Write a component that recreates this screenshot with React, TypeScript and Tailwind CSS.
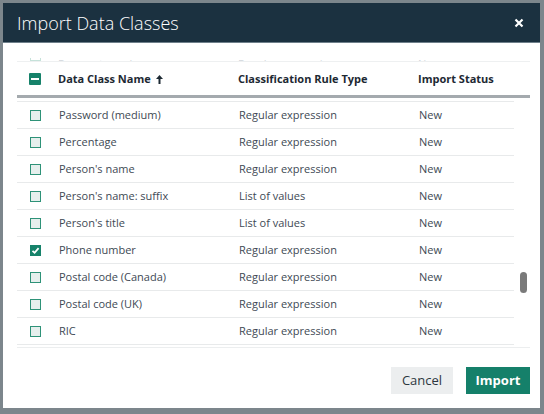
import React from "react";

const rows: { name: string; rule: string; checked?: boolean }[] = [
  { name: "Password (medium)", rule: "Regular expression" },
  { name: "Percentage", rule: "Regular expression" },
  { name: "Person's name", rule: "Regular expression" },
  { name: "Person's name: suffix", rule: "List of values" },
  { name: "Person's title", rule: "List of values" },
  { name: "Phone number", rule: "Regular expression", checked: true },
  { name: "Postal code (Canada)", rule: "Regular expression" },
  { name: "Postal code (UK)", rule: "Regular expression" },
  { name: "RIC", rule: "Regular expression" },
];

function Box({ checked }: { checked?: boolean }) {
  if (checked) {
    return (
      <div className="w-[11px] h-[11px] bg-[#16826a] border border-[#16826a] flex items-center justify-center">
        <svg width="9" height="9" viewBox="0 0 9 9">
          <path d="M1.5 4.8 L3.6 6.8 L7.6 2.2" stroke="white" strokeWidth="1.8" fill="none" />
        </svg>
      </div>
    );
  }
  return <div className="w-[11px] h-[11px] bg-[#e6efed] border border-[#2e9278]" />;
}

export default function App() {
  return (
    <div className="w-[544px] h-[414px] bg-[#7c868c] pt-[3px] pl-[3px] font-['Open_Sans',sans-serif] overflow-hidden">
      <div className="w-[537px] h-[405px] bg-white flex flex-col">
        <div className="h-[40px] bg-[#1b3140] border-b border-[#6f808b] flex items-center justify-between pl-[14px] pr-[16px] shrink-0">
          <span className="text-white text-[18px] font-light leading-none mt-[1px]">Import Data Classes</span>
          <svg width="10" height="10" viewBox="0 0 10 10" className="mt-[1px]">
            <path d="M1.5 1.5 L8.5 8.5 M8.5 1.5 L1.5 8.5" stroke="white" strokeWidth="2.2" />
          </svg>
        </div>
        <div className="pl-[14px] pr-[10px] pt-[15px] flex flex-col">
          {/* clipped scrolled row behind header */}
          <div className="h-[3px] overflow-hidden relative">
            <div className="flex items-end h-[3px] text-[11px] text-[#d3d8dc] leading-[11px]">
              <div className="w-[41px] shrink-0 pl-[13px]">
                <div className="w-[11px] h-[11px] border border-[#c6e2da]" />
              </div>
              <div className="w-[180px] shrink-0 -mb-[8px]">Passport number</div>
              <div className="w-[180px] shrink-0 -mb-[8px]">Regular expression</div>
              <div className="-mb-[8px]">New</div>
            </div>
          </div>
          <div className="h-px bg-[#eef0f1]" />
          <div className="h-[33px] flex items-center text-[11px] font-bold text-[#1d2933] pt-[1px]">
            <div className="w-[41px] shrink-0 pl-[12px]">
              <div className="w-[12px] h-[12px] bg-[#16826a] rounded-[1px] flex items-center justify-center">
                <div className="w-[8px] h-[2px] bg-white" />
              </div>
            </div>
            <div className="w-[180px] shrink-0 flex items-center">
              Data Class Name
              <svg width="7" height="9" viewBox="0 0 7 9" className="ml-[5px]">
                <path d="M3.5 0 L7 4 L4.5 4 L4.5 9 L2.5 9 L2.5 4 L0 4 Z" fill="#1d2933" />
              </svg>
            </div>
            <div className="w-[180px] shrink-0">Classification Rule Type</div>
            <div>Import Status</div>
          </div>
          <div className="h-[3px] bg-[#a4aaae]" />
          <div className="h-[3px]" />
          <div className="flex">
            <div className="w-[497px] border-t border-[#e8eaeb]">
              {rows.map((r) => (
                <div key={r.name} className="h-[27px] border-b border-[#e8eaeb] flex items-center text-[11px] text-[#3e4954]">
                  <div className="w-[42px] shrink-0 pl-[13px]">
                    <Box checked={r.checked} />
                  </div>
                  <div className="w-[180px] shrink-0">{r.name}</div>
                  <div className="w-[180px] shrink-0">{r.rule}</div>
                  <div>New</div>
                </div>
              ))}
            </div>
            <div className="w-[16px] pt-[171px] pl-[6px]">
              <div className="w-[7px] h-[21px] bg-[#7a7a7a] rounded-full" />
            </div>
          </div>
          <div className="h-[2px]" />
          <div className="h-px bg-[#eceeef]" />
          <div className="flex justify-end gap-[13px] pt-[19px]">
            <button className="w-[62px] h-[27px] bg-[#eceeef] text-[13px] text-[#2c3640]">Cancel</button>
            <button className="w-[64px] h-[27px] bg-[#15806a] text-[13px] font-bold text-white">Import</button>
          </div>
        </div>
      </div>
    </div>
  );
}
